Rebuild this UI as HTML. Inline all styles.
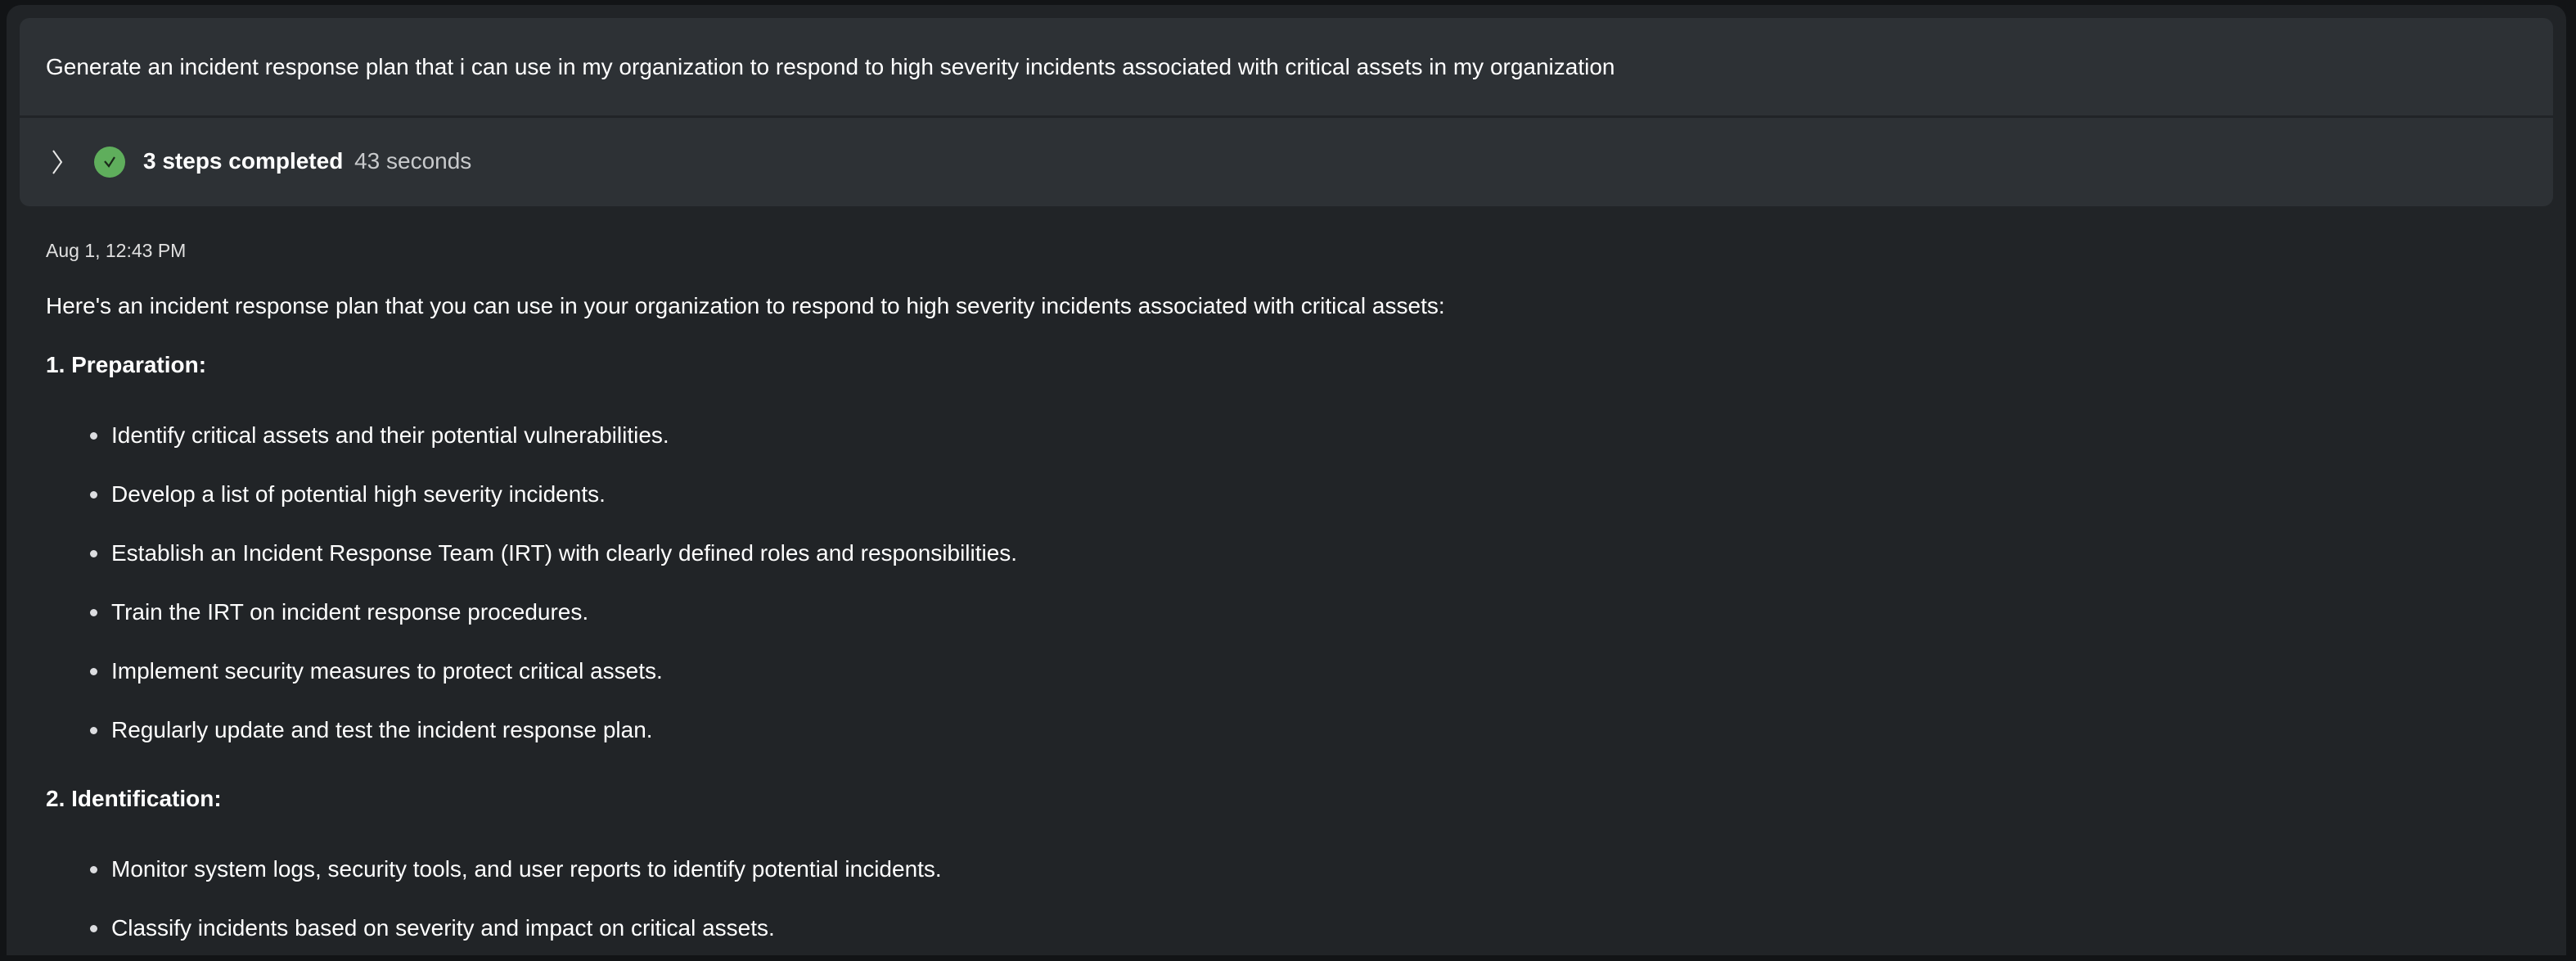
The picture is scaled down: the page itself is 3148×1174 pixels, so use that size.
<!DOCTYPE html>
<html><head><meta charset="utf-8"><style>
*{margin:0;padding:0;box-sizing:border-box}
body{width:3148px;height:1174px;background:#121416;font-family:"Liberation Sans",sans-serif;color:#fff;overflow:hidden;position:relative}
.panel{position:absolute;left:8px;top:6px;width:3128px;height:1161px;background:#212427;border-radius:18px 18px 0 0}
.card{position:absolute;left:24px;top:22px;width:3096px;height:230px;background:#2d3135;border-radius:12px}
.div{position:absolute;left:24px;top:141px;width:3096px;height:3px;background:#212427}
.t{position:absolute;white-space:nowrap;font-size:28px;line-height:36px}
.b{font-weight:bold}
.dot{position:absolute;left:110px;width:9px;height:9px;border-radius:50%;background:#dcdde0}
</style></head><body>
<div class="panel"></div>
<div class="card"></div>
<div class="div"></div>
<div class="t" style="left:56px;top:64px">Generate an incident response plan that i can use in my organization to respond to high severity incidents associated with critical assets in my organization</div>
<svg style="position:absolute;left:60px;top:182px" width="24" height="32" viewBox="0 0 24 32"><path d="M5 2 L15 16 L5 30" fill="none" stroke="#e8e8e8" stroke-width="2"/></svg>
<svg style="position:absolute;left:114px;top:178px" width="40" height="40" viewBox="0 0 40 40"><circle cx="20" cy="20" r="19" fill="#5fae5c"/><path d="M14 19 L19 25 L26 14" fill="none" stroke="#1b2a1b" stroke-width="2.2"/></svg>
<div class="t b" style="left:175px;top:179px">3 steps completed <span style="font-weight:normal;color:#c8cacc;margin-left:6px">43 seconds</span></div>
<div class="t" style="left:56px;top:288px;font-size:23px;color:#e0e0e0">Aug 1, 12:43 PM</div>
<div class="t" style="left:56px;top:356px">Here's an incident response plan that you can use in your organization to respond to high severity incidents associated with critical assets:</div>
<div class="t b" style="left:56px;top:428px">1. Preparation:</div>
<div class="dot" style="top:528px"></div><div class="t" style="left:136px;top:514px">Identify critical assets and their potential vulnerabilities.</div>
<div class="dot" style="top:600px"></div><div class="t" style="left:136px;top:586px">Develop a list of potential high severity incidents.</div>
<div class="dot" style="top:672px"></div><div class="t" style="left:136px;top:658px">Establish an Incident Response Team (IRT) with clearly defined roles and responsibilities.</div>
<div class="dot" style="top:744px"></div><div class="t" style="left:136px;top:730px">Train the IRT on incident response procedures.</div>
<div class="dot" style="top:816px"></div><div class="t" style="left:136px;top:802px">Implement security measures to protect critical assets.</div>
<div class="dot" style="top:888px"></div><div class="t" style="left:136px;top:874px">Regularly update and test the incident response plan.</div>
<div class="t b" style="left:56px;top:958px">2. Identification:</div>
<div class="dot" style="top:1058px"></div><div class="t" style="left:136px;top:1044px">Monitor system logs, security tools, and user reports to identify potential incidents.</div>
<div class="dot" style="top:1130px"></div><div class="t" style="left:136px;top:1116px">Classify incidents based on severity and impact on critical assets.</div>
</body></html>
